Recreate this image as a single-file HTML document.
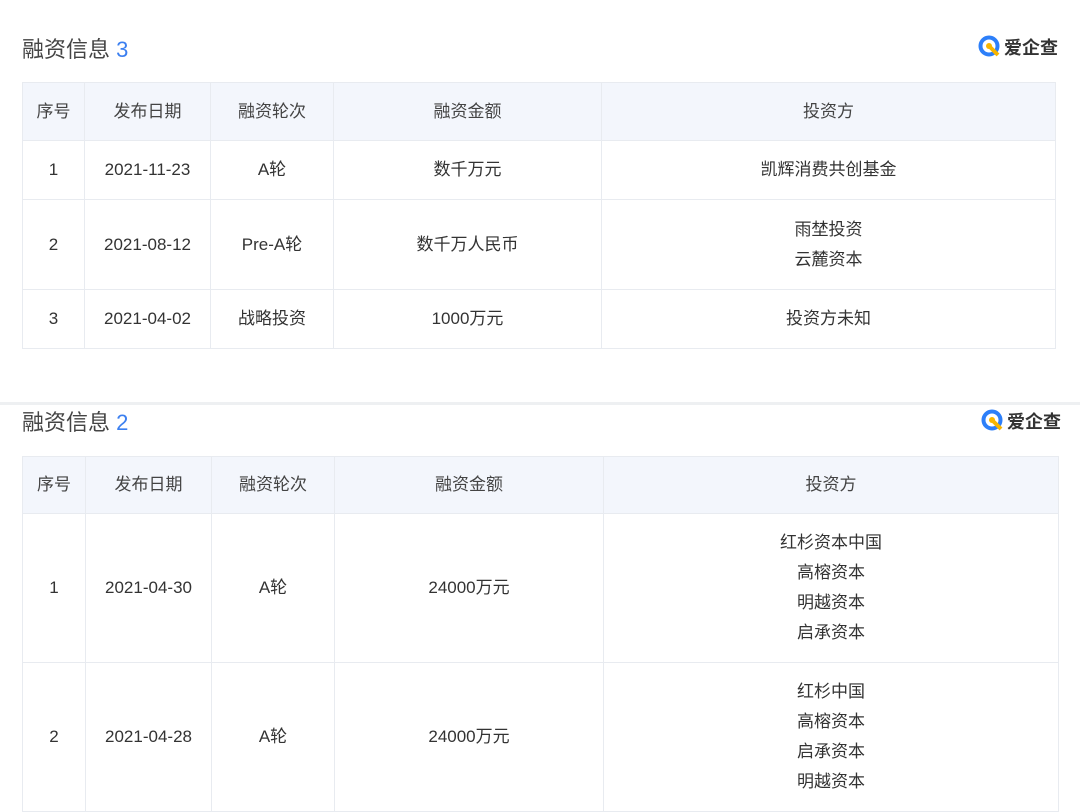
<!DOCTYPE html><html><head><meta charset="utf-8"><style>
*{margin:0;padding:0;box-sizing:border-box}
body{width:1080px;height:808px;overflow:hidden;background:#fff;font-family:"Liberation Sans","Noto Sans CJK SC",sans-serif;color:#333;position:relative}
.t{position:absolute;font-size:22px;color:#444}
.t b{font-weight:normal;color:#3b7ff0}
table{position:absolute;border-collapse:collapse;font-size:17px;table-layout:fixed}
td{border:1px solid #e8ebf0;text-align:center;vertical-align:middle;line-height:30px;color:#333}
tr.h td{background:#f3f6fc;color:#444}
.logo{position:absolute;display:flex;align-items:center;font-size:18px;font-weight:bold;color:#333}
.sep{position:absolute;left:0;top:402px;width:1080px;height:3px;background:#eef0f2}
</style></head><body>
<div class="t" style="left:22px;top:32px">融资信息 <b>3</b></div>
<div class="logo" style="left:978px;top:34px"><svg width="24" height="24" viewBox="0 0 24 24"><circle cx="11" cy="11" r="8.5" fill="none" stroke="#2d7ff9" stroke-width="4"/><path d="M11 11 L20 20" stroke="#f7b500" stroke-width="4"/><circle cx="11" cy="11" r="3" fill="#f7b500"/></svg><span style="margin-left:2px">爱企查</span></div>
<table style="left:22px;top:82px;width:1034px">
<colgroup><col style="width:62px"><col style="width:126px"><col style="width:123px"><col style="width:268px"><col></colgroup>
<tr class="h" style="height:58px"><td>序号</td><td>发布日期</td><td>融资轮次</td><td>融资金额</td><td>投资方</td></tr>
<tr style="height:59px"><td>1</td><td>2021-11-23</td><td>A轮</td><td>数千万元</td><td>凯辉消费共创基金</td></tr>
<tr style="height:90px"><td>2</td><td>2021-08-12</td><td>Pre-A轮</td><td>数千万人民币</td><td>雨埜投资<br>云麓资本</td></tr>
<tr style="height:59px"><td>3</td><td>2021-04-02</td><td>战略投资</td><td>1000万元</td><td>投资方未知</td></tr>
</table>
<div class="sep"></div>
<div class="t" style="left:22px;top:405px">融资信息 <b>2</b></div>
<div class="logo" style="left:981px;top:408px"><svg width="24" height="24" viewBox="0 0 24 24"><circle cx="11" cy="11" r="8.5" fill="none" stroke="#2d7ff9" stroke-width="4"/><path d="M11 11 L20 20" stroke="#f7b500" stroke-width="4"/><circle cx="11" cy="11" r="3" fill="#f7b500"/></svg><span style="margin-left:2px">爱企查</span></div>
<table style="left:22px;top:456px;width:1037px">
<colgroup><col style="width:63px"><col style="width:126px"><col style="width:123px"><col style="width:269px"><col></colgroup>
<tr class="h" style="height:57px"><td>序号</td><td>发布日期</td><td>融资轮次</td><td>融资金额</td><td>投资方</td></tr>
<tr style="height:149px"><td>1</td><td>2021-04-30</td><td>A轮</td><td>24000万元</td><td>红杉资本中国<br>高榕资本<br>明越资本<br>启承资本</td></tr>
<tr style="height:149px"><td>2</td><td>2021-04-28</td><td>A轮</td><td>24000万元</td><td>红杉中国<br>高榕资本<br>启承资本<br>明越资本</td></tr>
</table>
</body></html>
